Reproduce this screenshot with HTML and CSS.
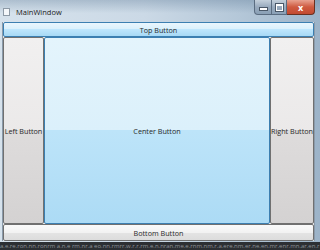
FILE: index.html
```html
<!DOCTYPE html>
<html lang="en">
<head>
<meta charset="UTF-8">
<title>MainWindow</title>
<link rel="stylesheet" href="styles.css">
</head>
<body>

<div class="window">
    <!-- title bar -->
    <div class="titlebar">
        <span class="app-icon"></span>
        <span class="title">MainWindow</span>
        <div class="caption">
            <span class="cap-btn cap-min"><span class="min-glyph"></span></span>
            <span class="cap-btn cap-max"><span class="max-glyph"></span></span>
            <span class="cap-btn cap-close">x</span>
        </div>
    </div>

    <!-- dock panel -->
    <div class="dock">
        <button class="btn btn-top">Top Button</button>
        <div class="middle">
            <button class="btn btn-side">Left Button</button>
            <button class="btn btn-center">Center Button</button>
            <button class="btn btn-side">Right Button</button>
        </div>
        <button class="btn btn-bottom">Bottom Button</button>
    </div>

    <div class="strip">a.e.re.ron.nn.ronrm a.n.e rm.nr.a eo.nn.rmrr.w.r.r.rm.e.n.nran.me.e.rnm.nm.r.a.ere.nm.er.ne.en.mr.enr.mn.ar.en.r</div>
</div>

</body>
</html>
```

FILE: styles.css
```css
body {
    margin: 0;
    width: 320px;
    height: 250px;
    overflow: hidden;
    font-family: "Open Sans", "DejaVu Sans", sans-serif;
}

.window {
    width: 320px;
    height: 250px;
    display: flex;
    flex-direction: column;
    background: linear-gradient(to right, #d6e2ec 0%, #cbd9e6 45%, #b4c7d8 75%, #9cb3c8 100%);
}

.titlebar {
    height: 22px;
    display: flex;
    align-items: center;
    padding-left: 3px;
    background: linear-gradient(to bottom, rgba(80, 110, 140, 0.3), rgba(255, 255, 255, 0) 60%);
}

.app-icon {
    width: 5px;
    height: 6px;
    margin-top: 2px;
    background: #f4f7fa;
    border: 1px solid #8d9aa6;
}

.title {
    margin-left: 6px;
    margin-top: 2px;
    font-size: 7.5px;
    color: #1a1a1a;
}

.caption {
    margin-left: auto;
    margin-right: 5px;
    align-self: flex-start;
    display: flex;
    height: 15px;
}

.cap-btn {
    display: flex;
    align-items: center;
    justify-content: center;
    height: 14px;
    border: 1px solid #5a6c80;
    border-top: none;
    color: #fff;
    font-size: 9px;
    font-weight: bold;
}

.cap-min {
    width: 16px;
    border-radius: 0 0 0 4px;
    background: linear-gradient(to bottom, #c4d0dc, #98aabd 50%, #8aa0b6);
}

.cap-max {
    width: 14px;
    border-left: none;
    background: linear-gradient(to bottom, #c4d0dc, #98aabd 50%, #8aa0b6);
}

.cap-close {
    width: 27px;
    border-left: none;
    border-radius: 0 0 4px 0;
    background: linear-gradient(to bottom, #e8a290, #cf5a40 50%, #c24a30);
    border-color: #6a3020;
}

.min-glyph {
    width: 7px;
    height: 2px;
    margin-top: 3px;
    background: #fff;
    border: 1px solid #4a5868;
}

.max-glyph {
    width: 5px;
    height: 4px;
    border: 1px solid #fff;
    border-top-width: 2px;
    outline: 1px solid #4a5868;
}

.dock {
    flex: 1;
    display: flex;
    flex-direction: column;
    margin: 0 5px 0 2px;
    background: #f0f0f0;
    border-left: 1px solid #8a9aaa;
    border-right: 1px solid #8a9aaa;
}

.middle {
    flex: 1;
    display: flex;
}

.btn {
    margin: 0;
    padding: 0;
    font-family: inherit;
    font-size: 7.2px;
    color: #2a2a2a;
    border: 1px solid #707070;
    border-radius: 2px;
    background: linear-gradient(to bottom, #f1f0f0 0%, #ebe9e9 50%, #dedcdc 50%, #d4d2d2 100%);
}

.btn-top {
    height: 15px;
    border-color: #3c7fb1;
    background: linear-gradient(to bottom, #eaf6fd 0%, #d9f0fc 50%, #bee6fd 50%, #a7d9f5 100%);
}

.btn-side {
    width: 41px;
    white-space: nowrap;
}

.btn-side:last-child {
    width: 44px;
}

.btn-center {
    flex: 1;
    border-color: #3c7fb1;
    background: linear-gradient(to bottom, #e4f4fc 0%, #dbf0fb 50%, #bde4f9 50%, #acdbf5 100%);
}

.btn-bottom {
    height: 17px;
    background: linear-gradient(to bottom, #fafafa 0%, #f2f2f2 50%, #e4e4e4 50%, #dcdcdc 100%);
}

.strip {
    height: 8px;
    margin-top: 1px;
    background: #2c2f33;
    color: #8d9196;
    font-size: 6px;
    line-height: 8px;
    white-space: nowrap;
    overflow: hidden;
}
```
